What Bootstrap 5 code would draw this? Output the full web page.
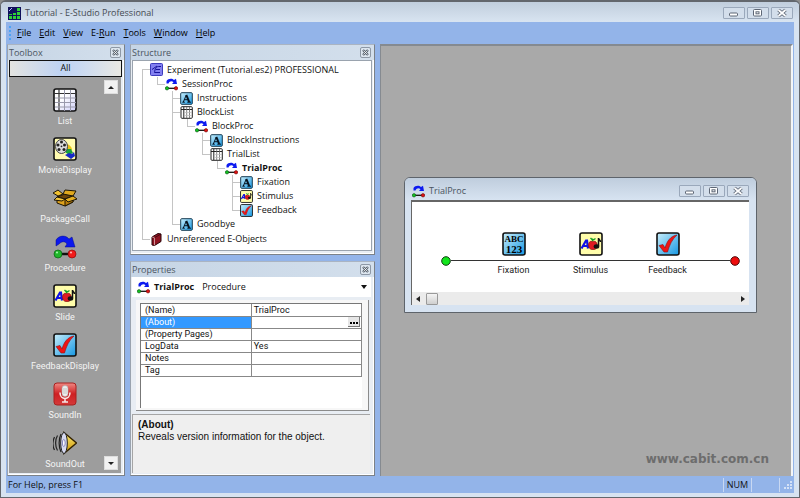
<!DOCTYPE html>
<html lang="en">
<head>
<meta charset="utf-8">
<meta name="viewport" content="width=device-width, initial-scale=1">
<title>Tutorial - E-Studio Professional</title>
<link href="https://cdn.jsdelivr.net/npm/bootstrap@5.3.0/dist/css/bootstrap.min.css" rel="stylesheet">
<style>
:root{--blue:#93b4e9;--frame:#d7e3f1}
body{font-family:"Open Sans","Noto Sans",sans-serif;font-size:9px;line-height:14px;color:#111;background:#8e8e8e}
svg{display:block;flex:none}
button{font:inherit;color:inherit}
.app{background:var(--frame);border:1px solid #63676d;border-top-width:2px;border-radius:6px 6px 0 0;padding:0 5px 4px}
.titlebar{height:20px;padding:3px 6px 0 7px;color:#454b52;background:linear-gradient(#c1cedd,#d8e4f1);margin:0 -5px;border-radius:4px 4px 0 0}
.caps{gap:2px}
.cap{width:22px;height:12px;border:1px solid #9aa8bb;background:#d3deeb;border-radius:1px;padding:0}
.menubar{height:23px;background:var(--blue);padding:0 3px;gap:8px}
.menubar a{color:#000;text-decoration:none}
.menubar u{text-underline-offset:1px}
.grip{width:2px;height:14px;margin-right:-2px;background:repeating-linear-gradient(#4ba3f5 0 2px,transparent 2px 4px)}
.work{background:var(--blue);padding:0 0 1px 1px;gap:5px}
.pane{background:#e8edf3;border:1px solid #7b8188;border-left-color:#9aa3ae;border-top-color:#aab4c2;box-shadow:inset -1px -1px #fff}
.pane-head{height:15px;padding:0 3px 0 1px;background:linear-gradient(90deg,#c6d5e5,#d3dfec);color:#4a545f}
.xbtn{width:11px;height:11px;border:1px solid #8d98a6;background:#dde6ef;border-radius:2px;padding:0}
.toolcol{width:118px}
.midcol{width:245px;gap:6px}
.all{height:17px;margin:0 2px 0 1px;border:1px solid #111;background:linear-gradient(90deg,#e4e4e0,#bfd3f3 45%,#c7d8f2 60%,#e9e8e2);padding:0;line-height:14px}
.tools{background:#9d9d9d;margin:0 3px 2px 1px;padding:11px 0 0}
.tool{height:49px;gap:1px;color:#f4f4f4;background:none;border:0;padding:0;font-family:Roboto,sans-serif;font-size:9px;line-height:12px;width:100%}
.tool span{margin-top:2px}
.scr{position:absolute;right:3px;width:14px;height:14px;border:1px solid #ddd;background:#f1f1f1;padding:0}
.scr.up{top:3px}.scr.dn{bottom:3px}
.tree{background:#fff;border:1px solid #9aa3ae;margin:0 2px 3px 1px;padding:1px 0 0 9px}
.tree ul{list-style:none;margin:0;padding:0 0 0 7px}
.tree>ul{padding:0}
.tree li{padding-left:8px;background:linear-gradient(#c4c4c4,#c4c4c4) 0 0/1px 100% no-repeat,linear-gradient(#c4c4c4,#c4c4c4) 0 7px/8px 1px no-repeat}
.tree li:last-child{background-size:1px 7px,8px 1px}
.tree>ul>li:first-child{background-position:0 7px,0 7px;padding-bottom:1px}
.node{height:14px;gap:4px;white-space:nowrap}
.node.top-node{height:15px}
.picker{height:20px;margin:0 3px 0 1px;padding:0 3px 0 5px;border:0;background:#fff;color:#111}
.gridbox{margin:3px 5px 0 5px;padding:3px 6px 2px 4px;border:solid #8b8b8b;border-width:0 1px 1px 0;background:#f7f7f7}
.gridinner{height:105px;background:#fff;border:1px solid #777;border-width:1px 0 0 1px}
.props{width:100%;border-collapse:collapse;font-family:Roboto,sans-serif;font-size:9px;line-height:10px}
.props td,.props th{height:12px;padding:0 4px;border:solid #888;border-width:0 1px 1px 0;font-weight:400}
.props td{padding-left:2px}
.props th{width:50%}
.props .sel{background:#3399ff;color:#fff}
.dots{width:12px;height:10px;border:1px solid #777;border-width:0 1px 1px 0;background:#e6e6e6;padding:0;margin-right:-3px}
.desc{background:#efefef;margin:3px 4px 2px 1px;padding:4px 5px;border:solid #a5a5a5;border-width:1px 0 0 1px;font-family:"Liberation Sans",sans-serif;font-size:10px;line-height:12px}
.mdi{background:#a9a9a9;border-top:2px solid #858a90;border-right:2px solid #f4f6f8;border-left:1px solid #858a90;margin-right:1px}
.child{position:absolute;left:23px;top:131px;width:353px;border:1px solid #5e646b;border-radius:6px 6px 0 0;background:var(--frame);padding:0 7px 7px 6px}
.child-title{height:22px;margin:0 -7px 0 -6px;padding:4px 7px 0 7px;color:#4a545f;background:linear-gradient(#bfcddd,#d7e3f1);border-radius:5px 5px 0 0}
.canvas{background:#fff;border:solid #666;border-width:2px 0 0 1px}
.flow{height:90px;padding:30px 9px 0 29px;font-family:Roboto,sans-serif;font-size:9px;line-height:12px;color:#222}
.stop{margin-top:24px}
.wire{height:1px;background:#333;margin-top:28px}
.step{width:77px;gap:4px;background:linear-gradient(#333,#333) 0 28px/100% 1px no-repeat}
.hscroll{height:13px;background:#ebebeb;padding:0 4px;gap:6px}
.thumb{width:12px;height:12px;border:1px solid #999;border-radius:1px;background:linear-gradient(#f4f4f4,#cfcfcf)}
.brand{font-family:"DejaVu Sans",sans-serif;font-weight:700;font-size:12px;color:#6d6d6d;padding:0 22px 9px 0;line-height:16px}
.status{height:16px;background:var(--blue);padding:0 1px 0 2px}
.status .cell{border-left:1px solid #c8d8f2;height:14px}
.key{width:28px}
</style>
<script src="https://cdn.jsdelivr.net/npm/bootstrap@5.3.0/dist/js/bootstrap.bundle.min.js"></script>
</head>
<body>
<svg width="0" height="0" class="position-absolute" aria-hidden="true">
<defs>
<linearGradient id="cy" x1="0" y1="0" x2="1" y2="1"><stop offset="0" stop-color="#c9eefb"/><stop offset="1" stop-color="#1597e2"/></linearGradient>
<linearGradient id="rd" x1="0" y1="0" x2="0" y2="1"><stop offset="0" stop-color="#ef8a84"/><stop offset=".5" stop-color="#cf1f22"/><stop offset="1" stop-color="#d43a3a"/></linearGradient>
<linearGradient id="gd" x1="0" y1="0" x2="0" y2="1"><stop offset="0" stop-color="#fff07a"/><stop offset="1" stop-color="#c98f00"/></linearGradient>
<linearGradient id="tb" x1="0" y1="0" x2="1" y2="1"><stop offset=".4" stop-color="#fff"/><stop offset="1" stop-color="#cfcffa"/></linearGradient>
</defs>
<symbol id="list" viewBox="0 0 24 24"><rect x="1" y="1" width="22" height="22" rx="2" fill="url(#tb)" stroke="#111" stroke-width="1.6"/><path d="M1 5.5h22M6 1v22" stroke="#333" stroke-width="1.2"/><path d="M11.5 2v21M17.500 2v21M2 10h21M2 14.500h21M2 19h21" stroke="#9a9aac"/></symbol>
<symbol id="slist" viewBox="0 0 13 13"><rect x="1" y=".7" width="11.300" height="11.600" rx="1" fill="#fff" stroke="#222"/><path d="M1 3.500h11M3.800 1v11" stroke="#222"/><path d="M6.700 1v11M9.500 1v11" stroke="#666" stroke-width=".8"/><path d="M4 6.500h8M4 9.500h8" stroke="#bbb" stroke-width=".7"/></symbol>
<symbol id="movie" viewBox="0 0 24 24"><rect x="1" y="1" width="22" height="22" rx="2" fill="#fffbb0" stroke="#111" stroke-width="1.600"/><path d="M13 7c3 0 6 3 6 6l-5 1z" fill="#e8c116"/><path d="M14 12l4 0 2 4-4 2-4-3z" fill="#19a33c"/><ellipse cx="8.500" cy="9.500" rx="6" ry="7" fill="#ddd" stroke="#444"/><g fill="#222"><circle cx="8.500" cy="5" r="1.500"/><circle cx="5" cy="8" r="1.500"/><circle cx="11.500" cy="8" r="1.500"/><circle cx="6" cy="12.500" r="1.500"/><circle cx="11" cy="12.500" r="1.500"/><circle cx="8.500" cy="9.300" r=".9"/></g><path d="M12 18l4-2 3 1 2-2 1 4-4 3z" fill="#1729c8"/></symbol>
<symbol id="box" viewBox="0 0 24 24"><g stroke="#1d1505" stroke-linejoin="round"><path d="M4 11l8 2 8-3v6l-8 4-8-3z" fill="#dfa21c"/><path d="M12 13v7l8-4v-6z" fill="#b87c08"/><path d="M4 11l8-3 8 2-8 3z" fill="#6b430a"/><path d="M5 10L0 7l5-3 5 4z" fill="#f1c232"/><path d="M10 8l2-4 11 1-3 5z" fill="#e0a81e"/><path d="M12 13l-3 2-8-1 3-3z" fill="#f3c73e"/><path d="M12 13l3 3 9-3-4-3z" fill="#e3ad22"/></g></symbol>
<symbol id="proc" viewBox="0 0 24 24"><path d="M3 11V5c3-5 10-5 13-1l3-2 3 10h-10l2-3c-2-3-5-3-8 0z" fill="#0b18ee" stroke="#050a88" stroke-width=".5"/><path d="M7 19h10" stroke="#111" stroke-width="2.500"/><circle cx="5" cy="19" r="4" fill="#1fb52a" stroke="#096012" stroke-width=".7"/><circle cx="19" cy="19" r="4" fill="#f11b1b" stroke="#8d0909" stroke-width=".7"/><circle cx="4" cy="17.500" r="1" fill="#a8ffb0"/><circle cx="18" cy="17.500" r="1" fill="#ffc0c0"/></symbol>
<symbol id="sproc" viewBox="0 0 13 13"><path d="M1.500 5.500V3C3 .5 7 0 9 2l2-1.200L12 6H7l1.500-1.700C7 2.800 4.500 3 3.500 5.500z" fill="#0d1bf0"/><path d="M2 10.300h9" stroke="#111" stroke-width="1.300"/><circle cx="2" cy="10.300" r="1.700" fill="#12c321" stroke="#0a4d10" stroke-width=".6"/><circle cx="11" cy="10.300" r="1.700" fill="#e01414" stroke="#600" stroke-width=".6"/></symbol>
<symbol id="slide" viewBox="0 0 24 24"><rect x="1" y="1" width="22" height="22" rx="2" fill="#fffdaa" stroke="#111" stroke-width="1.600"/><path d="M2.500 16.500L7 8.500h1l1 8M4.500 14h4" fill="none" stroke="#1111e6" stroke-width="2.200"/><path d="M13 9.500c-4-1.500-5 7-.5 8h3c4.500-1 3-9.500-1-8z" fill="#dc1a22" stroke="#700" stroke-width=".6"/><path d="M13.500 9V6.500m0 2l3-2M13.500 8l-2-2" stroke="#15a025" stroke-width="1.400"/><ellipse cx="17.500" cy="14.500" rx="2.800" ry="2.200" fill="#111"/><path d="M19.500 14V6c0 2 2 1.500 2 4" fill="none" stroke="#111" stroke-width="1.500"/></symbol>
<symbol id="feed" viewBox="0 0 24 24"><rect x="1" y="1" width="22" height="22" rx="2" fill="url(#cy)" stroke="#111" stroke-width="1.600"/><path d="M3 13.500l4-1 2 3.500C11 9 14.500 4 21 3 16 7.500 13.500 13 11.500 20H8z" fill="#f01414" stroke="#8d1010" stroke-width=".6"/></symbol>
<symbol id="mic" viewBox="0 0 24 24"><rect x="1" y="1" width="22" height="22" rx="3" fill="url(#rd)" stroke="#a8201f"/><rect x="9" y="3.500" width="6" height="11" rx="3" fill="#eee" stroke="#aaa" stroke-width=".6"/><path d="M7 10.500c0 8 10 8 10 0M12 16.500V20M9 20h6" fill="none" stroke="#f5e6e6" stroke-width="1.600"/><path d="M10 7h4M10 9h4M10 11h4" stroke="#aaa" stroke-width=".6"/></symbol>
<symbol id="spk" viewBox="0 0 24 24"><path d="M1.500 6c-2 4-2 9 0 13M4.500 4.500c-2.500 4-2.500 11 0 15M8 3c-2.500 5-2.500 13 0 18" stroke="#222" fill="none" stroke-width="1.200"/><path d="M11 1.500l12.500 10.500L11 22.500z" fill="url(#gd)" stroke="#332200" stroke-width="1.400"/><ellipse cx="11" cy="12" rx="3.300" ry="10.500" fill="#d6d9f0" stroke="#222"/><ellipse cx="10.800" cy="12" rx="1.400" ry="3.500" fill="#fff" stroke="#5555a0" stroke-width=".7"/></symbol>
<symbol id="ta" viewBox="0 0 13 13"><rect x=".7" y=".7" width="11.600" height="11.600" rx="1" fill="url(#cy)" stroke="#163b50"/><path d="M3.300 10L6.300 3M4.300 7.700h4M2.300 10.200h2.500M7.300 10.200h3.700" fill="none" stroke="#07131f"/><path d="M6.300 2.800L9.200 10" stroke="#07131f" stroke-width="2"/></symbol>
<symbol id="exp" viewBox="0 0 13 13"><rect x=".5" y=".5" width="12" height="12" rx="1" fill="#827ff0" stroke="#3d3bbd"/><path d="M11 3.500H8.500C6 3.500 5 6 4.500 9.500H10M6 6.500h4M2 6.500l5-3.500" fill="none" stroke="#17139a"/></symbol>
<symbol id="book" viewBox="0 0 13 13"><path d="M2 4l6-3.500 3 .5v7.500L4.500 12.500 2 12z" fill="#8e1421" stroke="#2b0509"/><path d="M2 4l2.500.7v7.500" fill="none" stroke="#e9c9c9" stroke-width=".7"/><path d="M4.500 4.700L11 1" stroke="#2b0509" stroke-width=".7"/></symbol>
<symbol id="cmin" viewBox="0 0 20 10"><rect x="5.500" y="5" width="8" height="3" rx="1" fill="#fff" stroke="#5d6675"/></symbol>
<symbol id="cmax" viewBox="0 0 20 10"><rect x="5.500" y="1.500" width="8" height="6.500" rx="1" fill="#fff" stroke="#5d6675"/><rect x="8" y="3.800" width="3" height="2" fill="#fff" stroke="#5d6675"/></symbol>
<symbol id="ccls" viewBox="0 0 20 10"><path d="M6.500 2l7 6M13.500 2l-7 6" stroke="#5d6675" stroke-width="3.600"/><path d="M6.500 2l7 6M13.500 2l-7 6" stroke="#fff" stroke-width="1.700"/></symbol>
<symbol id="xx" viewBox="0 0 9 9"><path d="M2 2l5 5M7 2L2 7" stroke="#59636f" stroke-width="2.400"/><path d="M2.500 2.500l4 4M6.500 2.500l-4 4" stroke="#fff" stroke-width=".8"/></symbol>
</svg>

<div class="app d-flex flex-column vh-100">
  <header class="titlebar d-flex align-items-center gap-1">
    <svg width="13" height="13" viewBox="0 0 13 13"><rect width="13" height="13" fill="#10105c"/><path d="M1 9h3v3H1zM5 9h3v3H5zM9 9h3v3H9zM5 6h3v2H5zM9 5h3v3H9zM9 1h3v3H9zM1 7h3v1H1z" fill="#2ed136"/><path d="M1 4l3-3" stroke="#bbf"/></svg>
    <span class="me-auto">Tutorial - E-Studio Professional</span>
    <div class="caps d-flex">
      <button class="cap" aria-label="Minimize"><svg width="20" height="10"><use href="#cmin"/></svg></button>
      <button class="cap" aria-label="Maximize"><svg width="20" height="10"><use href="#cmax"/></svg></button>
      <button class="cap" aria-label="Close"><svg width="20" height="10"><use href="#ccls"/></svg></button>
    </div>
  </header>
  <nav class="menubar d-flex align-items-center">
    <span class="grip"></span>
    <a href="#"><u>F</u>ile</a><a href="#"><u>E</u>dit</a><a href="#"><u>V</u>iew</a><a href="#">E-<u>R</u>un</a><a href="#"><u>T</u>ools</a><a href="#"><u>W</u>indow</a><a href="#"><u>H</u>elp</a>
  </nav>
  <main class="work d-flex flex-grow-1 overflow-hidden">
    <aside class="toolcol pane d-flex flex-column flex-shrink-0">
      <div class="pane-head d-flex align-items-center justify-content-between"><span>Toolbox</span><button class="xbtn" aria-label="Close Toolbox"><svg width="9" height="9"><use href="#xx"/></svg></button></div>
      <button class="all">All</button>
      <div class="tools position-relative flex-grow-1 overflow-hidden">
        <button class="tool d-flex flex-column align-items-center"><svg width="24" height="24"><use href="#list"/></svg><span>List</span></button>
        <button class="tool d-flex flex-column align-items-center"><svg width="24" height="24"><use href="#movie"/></svg><span>MovieDisplay</span></button>
        <button class="tool d-flex flex-column align-items-center"><svg width="24" height="24"><use href="#box"/></svg><span>PackageCall</span></button>
        <button class="tool d-flex flex-column align-items-center"><svg width="24" height="24"><use href="#proc"/></svg><span>Procedure</span></button>
        <button class="tool d-flex flex-column align-items-center"><svg width="24" height="24"><use href="#slide"/></svg><span>Slide</span></button>
        <button class="tool d-flex flex-column align-items-center"><svg width="24" height="24"><use href="#feed"/></svg><span>FeedbackDisplay</span></button>
        <button class="tool d-flex flex-column align-items-center"><svg width="24" height="24"><use href="#mic"/></svg><span>SoundIn</span></button>
        <button class="tool d-flex flex-column align-items-center"><svg width="24" height="24"><use href="#spk"/></svg><span>SoundOut</span></button>
        <button class="scr up" aria-label="Scroll up"><svg width="12" height="12"><path d="M3 8l3-3 3 3z" fill="#222"/></svg></button>
        <button class="scr dn" aria-label="Scroll down"><svg width="12" height="12"><path d="M3 5l3 3 3-3z" fill="#222"/></svg></button>
      </div>
    </aside>
    <div class="midcol d-flex flex-column flex-shrink-0">
      <section class="pane d-flex flex-column">
        <div class="pane-head d-flex align-items-center justify-content-between"><span>Structure</span><button class="xbtn" aria-label="Close Structure"><svg width="9" height="9"><use href="#xx"/></svg></button></div>
        <div class="tree pb-1">
          <ul>
            <li><div class="node d-flex align-items-center top-node"><svg width="13" height="13"><use href="#exp"/></svg>Experiment (Tutorial.es2) PROFESSIONAL</div>
              <ul><li><div class="node d-flex align-items-center"><svg width="13" height="13"><use href="#sproc"/></svg>SessionProc</div>
                <ul>
                  <li><div class="node d-flex align-items-center"><svg width="13" height="13"><use href="#ta"/></svg>Instructions</div></li>
                  <li><div class="node d-flex align-items-center"><svg width="13" height="13"><use href="#slist"/></svg>BlockList</div>
                    <ul><li><div class="node d-flex align-items-center"><svg width="13" height="13"><use href="#sproc"/></svg>BlockProc</div>
                      <ul>
                        <li><div class="node d-flex align-items-center"><svg width="13" height="13"><use href="#ta"/></svg>BlockInstructions</div></li>
                        <li><div class="node d-flex align-items-center"><svg width="13" height="13"><use href="#slist"/></svg>TrialList</div>
                          <ul><li><div class="node d-flex align-items-center"><svg width="13" height="13"><use href="#sproc"/></svg><strong>TrialProc</strong></div>
                            <ul>
                              <li><div class="node d-flex align-items-center"><svg width="13" height="13"><use href="#ta"/></svg>Fixation</div></li>
                              <li><div class="node d-flex align-items-center"><svg width="13" height="13"><use href="#slide"/></svg>Stimulus</div></li>
                              <li><div class="node d-flex align-items-center"><svg width="13" height="13"><use href="#feed"/></svg>Feedback</div></li>
                            </ul></li></ul></li>
                      </ul></li></ul></li>
                  <li><div class="node d-flex align-items-center"><svg width="13" height="13"><use href="#ta"/></svg>Goodbye</div></li>
                </ul></li></ul></li>
            <li><div class="node d-flex align-items-center"><svg width="13" height="13"><use href="#book"/></svg>Unreferenced E-Objects</div></li>
          </ul>
        </div>
      </section>
      <section class="pane d-flex flex-column flex-grow-1">
        <div class="pane-head d-flex align-items-center justify-content-between"><span>Properties</span><button class="xbtn" aria-label="Close Properties"><svg width="9" height="9"><use href="#xx"/></svg></button></div>
        <button class="picker d-flex align-items-center gap-1"><svg width="13" height="13"><use href="#sproc"/></svg><strong>TrialProc</strong><span class="ms-1 me-auto">Procedure</span><svg width="7" height="4"><path d="M0 0h6L3 4z" fill="#111"/></svg></button>
        <div class="gridbox"><div class="gridinner">
          <table class="props">
            <tr><th scope="row">(Name)</th><td>TrialProc</td></tr>
            <tr><th scope="row" class="sel">(About)</th><td><button class="dots d-block ms-auto" aria-label="Browse"><svg width="11" height="9"><path d="M2 5h2v2H2zM5 5h2v2H5zM8 5h2v2H8z"/></svg></button></td></tr>
            <tr><th scope="row">(Property Pages)</th><td></td></tr>
            <tr><th scope="row">LogData</th><td>Yes</td></tr>
            <tr><th scope="row">Notes</th><td></td></tr>
            <tr><th scope="row">Tag</th><td></td></tr>
          </table>
        </div></div>
        <div class="desc flex-grow-1"><strong>(About)</strong><div>Reveals version information for the object.</div></div>
      </section>
    </div>
    <section class="mdi position-relative flex-grow-1 d-flex align-items-end justify-content-end">
      <div class="child">
        <div class="child-title d-flex align-items-center gap-1"><svg width="13" height="13"><use href="#sproc"/></svg><span class="me-auto">TrialProc</span>
          <div class="caps d-flex">
          <button class="cap" aria-label="Minimize"><svg width="20" height="10"><use href="#cmin"/></svg></button>
          <button class="cap" aria-label="Maximize"><svg width="20" height="10"><use href="#cmax"/></svg></button>
          <button class="cap" aria-label="Close"><svg width="20" height="10"><use href="#ccls"/></svg></button></div></div>
        <div class="canvas">
          <div class="flow d-flex">
            <svg class="stop" width="10" height="10"><circle cx="5" cy="5" r="4.300" fill="#12e51c" stroke="#123d14"/></svg>
            <span class="wire flex-grow-1"></span>
            <div class="step d-flex flex-column align-items-center"><svg width="24" height="24" viewBox="0 0 24 24"><rect x="1" y="1" width="22" height="22" rx="2" fill="url(#cy)" stroke="#111" stroke-width="1.600"/><text x="12" y="10" text-anchor="middle" font-family="Liberation Serif,serif" font-weight="700" font-size="9">ABC</text><text x="12" y="21" text-anchor="middle" font-family="Liberation Serif,serif" font-weight="700" font-size="11">123</text></svg><span class="pt-1">Fixation</span></div>
            <div class="step d-flex flex-column align-items-center"><svg width="24" height="24"><use href="#slide"/></svg><span class="pt-1">Stimulus</span></div>
            <div class="step d-flex flex-column align-items-center"><svg width="24" height="24"><use href="#feed"/></svg><span class="pt-1">Feedback</span></div>
            <span class="wire flex-grow-1"></span>
            <svg class="stop" width="10" height="10"><circle cx="5" cy="5" r="4.300" fill="#ee0d0d" stroke="#4d0808"/></svg>
          </div>
          <div class="hscroll d-flex align-items-center"><svg width="4" height="6"><path d="M4 0v6L0 3z" fill="#222"/></svg><span class="thumb me-auto"></span><svg width="4" height="6"><path d="M0 0v6l4-3z" fill="#222"/></svg></div>
        </div>
      </div>
      <div class="brand">www.cabit.com.cn</div>
    </section>
  </main>
  <footer class="status d-flex align-items-center"><span class="me-auto">For Help, press F1</span><span class="cell key text-center">NUM</span><span class="cell key"></span><span class="cell ps-1"></span><svg width="9" height="9"><path d="M6 0h2v2H6zM3 3h2v2H3zM6 3h2v2H6zM0 6h2v2H0zM3 6h2v2H3zM6 6h2v2H6z" fill="#d5e2f7"/></svg></footer>
</div>
</body>
</html>
